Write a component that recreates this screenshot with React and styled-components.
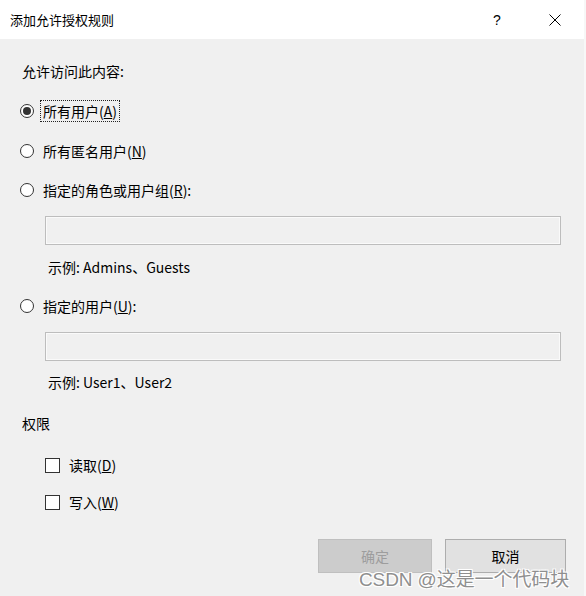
import React from "react";
import styled, { createGlobalStyle } from "styled-components";

const Global = createGlobalStyle`
  html, body { margin: 0; padding: 0; background: #f0f0f0; }
  body { font-family: "Noto Sans CJK SC", "Noto Sans", sans-serif; color: #000; }
`;

const Dialog = styled.div`
  position: relative;
  width: 586px;
  height: 596px;
  background: #f0f0f0;
  display: flex;
  flex-direction: column;
  overflow: hidden;
  box-sizing: border-box;
  border-right: 2px solid #f7f7f7;
`;

const TitleBar = styled.div`
  height: 39px;
  background: #fff;
  display: flex;
  align-items: center;
  padding-left: 10px;
  flex-shrink: 0;
`;

const Title = styled.div`
  font-size: 13px;
  flex: 1;
  line-height: 1;
  margin-top: -1px;
`;

const TitleButton = styled.div`
  width: 58px;
  height: 39px;
  display: flex;
  align-items: center;
  justify-content: center;
  font-family: "Liberation Sans", sans-serif;
  font-size: 14px;
`;

const Body = styled.div`
  display: flex;
  flex-direction: column;
  padding: 24px 0 0 22px;
  font-size: 14px;
`;

const Label = styled.div`
  height: 16px;
  line-height: 16px;
  margin-bottom: ${(p) => p.$mb || 0}px;
`;

const Row = styled.div`
  display: flex;
  align-items: center;
  height: 24px;
  margin-left: ${(p) => p.$indent || 0}px;
  margin-bottom: ${(p) => p.$mb || 0}px;
`;

const Radio = styled.span`
  width: 14px;
  height: 14px;
  box-sizing: border-box;
  border: 1px solid #333;
  border-radius: 50%;
  background: #fff;
  display: flex;
  align-items: center;
  justify-content: center;
  margin-left: -2px;
  margin-right: 8px;
  &::after {
    content: "";
    display: ${(p) => (p.$checked ? "block" : "none")};
    width: 8px;
    height: 8px;
    border-radius: 50%;
    background: #333;
  }
`;

const Checkbox = styled.span`
  width: 15px;
  height: 15px;
  box-sizing: border-box;
  border: 1px solid #333;
  background: #fff;
  margin-right: 8px;
`;

const Text = styled.span`
  line-height: 18px;
  padding: 1px 2px;
  margin-left: -2px;
  border: 1px ${(p) => (p.$focus ? "dotted #222" : "solid transparent")};
`;

const Input = styled.div`
  margin-left: 23px;
  width: 516px;
  height: 29px;
  box-sizing: border-box;
  border: 1px solid #bdbdbd;
  box-shadow: inset 0 0 0 1px #fafafa;
  background: #f0f0f0;
`;

const Example = styled.div`
  margin-left: 26px;
  height: 18px;
  line-height: 18px;
  margin-top: ${(p) => p.$mt}px;
  margin-bottom: ${(p) => p.$mb}px;
`;

const Buttons = styled.div`
  display: flex;
  justify-content: flex-end;
  gap: 13px;
  padding-right: 18px;
  margin-top: 25px;
`;

const Button = styled.div`
  height: 34px;
  width: ${(p) => p.$w}px;
  box-sizing: border-box;
  display: flex;
  align-items: center;
  justify-content: center;
  font-size: 14px;
  border: 1px solid ${(p) => (p.$disabled ? "#bfbfbf" : "#adadad")};
  background: ${(p) => (p.$disabled ? "#cccccc" : "#e1e1e1")};
  color: ${(p) => (p.$disabled ? "#9d9d9d" : "#000")};
`;

const Watermark = styled.div`
  position: absolute;
  left: 359px;
  top: 564px;
  font-family: "Liberation Sans", "Noto Sans CJK SC", sans-serif;
  font-size: 19px;
  color: #8f8f8f;
  letter-spacing: -0.1px;
  text-shadow: 1px 1px 0 #fff, -1px -1px 0 #fff, 1px -1px 0 #fff, -1px 1px 0 #fff;
  white-space: nowrap;
`;

export default function App() {
  return (
    <>
      <Global />
      <Dialog>
        <TitleBar>
          <Title>添加允许授权规则</Title>
          <TitleButton>?</TitleButton>
          <TitleButton>
            <svg width="12" height="12" viewBox="0 0 12 12">
              <path d="M0.5 0.5 L11.5 11.5 M11.5 0.5 L0.5 11.5" stroke="#000" strokeWidth="1" />
            </svg>
          </TitleButton>
        </TitleBar>
        <Body>
          <Label $mb={20}>允许访问此内容:</Label>
          <Row $mb={16}>
            <Radio $checked />
            <Text $focus>所有用户(<u>A</u>)</Text>
          </Row>
          <Row $mb={15}>
            <Radio />
            <Text>所有匿名用户(<u>N</u>)</Text>
          </Row>
          <Row $mb={14}>
            <Radio />
            <Text>指定的角色或用户组(<u>R</u>):</Text>
          </Row>
          <Input />
          <Example $mt={13} $mb={18}>示例: Admins、Guests</Example>
          <Row $mb={14}>
            <Radio />
            <Text>指定的用户(<u>U</u>):</Text>
          </Row>
          <Input />
          <Example $mt={12} $mb={24}>示例: User1、User2</Example>
          <Label $mb={22}>权限</Label>
          <Row $indent={23} $mb={13}>
            <Checkbox />
            <Text>读取(<u>D</u>)</Text>
          </Row>
          <Row $indent={23}>
            <Checkbox />
            <Text>写入(<u>W</u>)</Text>
          </Row>
        </Body>
        <Buttons>
          <Button $disabled $w={114}>确定</Button>
          <Button $w={121}>取消</Button>
        </Buttons>
        <Watermark>CSDN @这是一个代码块</Watermark>
      </Dialog>
    </>
  );
}
